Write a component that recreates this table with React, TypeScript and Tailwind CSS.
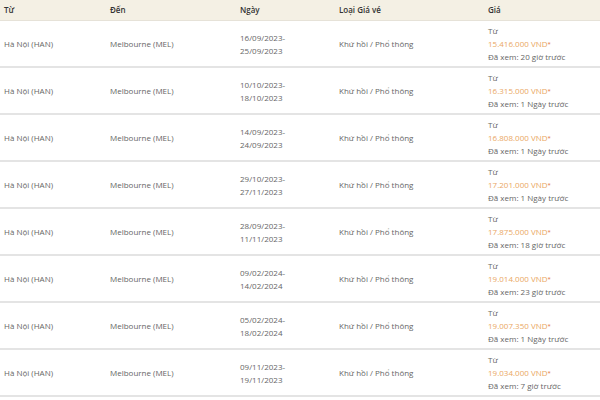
import React from "react";

const rows = [
  ["16/09/2023-", "25/09/2023", "15.416.000 VND", "Đã xem: 20 giờ trước"],
  ["10/10/2023-", "18/10/2023", "16.315.000 VND", "Đã xem: 1 Ngày trước"],
  ["14/09/2023-", "24/09/2023", "16.808.000 VND", "Đã xem: 1 Ngày trước"],
  ["29/10/2023-", "27/11/2023", "17.201.000 VND", "Đã xem: 1 Ngày trước"],
  ["28/09/2023-", "11/11/2023", "17.875.000 VND", "Đã xem: 18 giờ trước"],
  ["09/02/2024-", "14/02/2024", "19.014.000 VND", "Đã xem: 23 giờ trước"],
  ["05/02/2024-", "18/02/2024", "19.007.350 VND", "Đã xem: 1 Ngày trước"],
  ["09/11/2023-", "19/11/2023", "19.034.000 VND", "Đã xem: 7 giờ trước"],
];

export default function App() {
  return (
    <div
      className="w-[600px] h-[400px] overflow-hidden bg-white text-[8px] text-[#666]"
      style={{ fontFamily: '"Open Sans", sans-serif' }}
    >
      <div className="grid grid-cols-[106px_130px_99px_149px_1fr] h-[21px] items-center bg-[#f4f0e4] border-b border-[#e6e2d8] font-semibold text-[#333]">
        <div className="pl-[4px]">Từ</div>
        <div className="pl-[4px]">Đến</div>
        <div className="pl-[4px]">Ngày</div>
        <div className="pl-[4px]">Loại Giá vé</div>
        <div className="pl-[4px]">Giá</div>
      </div>
      {rows.map((r, i) => (
        <div
          key={i}
          className="grid grid-cols-[106px_130px_99px_149px_1fr] items-center h-[47px] border-b-2 border-[#e4e4e4] leading-[13px]"
        >
          <div className="pl-[4px]">Hà Nội (HAN)</div>
          <div className="pl-[4px]">Melbourne (MEL)</div>
          <div className="pl-[4px]">
            <div>{r[0]}</div>
            <div>{r[1]}</div>
          </div>
          <div className="pl-[4px]">Khứ hồi / Phổ thông</div>
          <div className="pl-[4px]">
            <div>Từ</div>
            <div className="text-[#eaa763]">
              {r[2]}
              <sup className="text-[6px] text-[#e2733b] relative top-[-1px]">*</sup>
            </div>
            <div>{r[3]}</div>
          </div>
        </div>
      ))}
    </div>
  );
}
